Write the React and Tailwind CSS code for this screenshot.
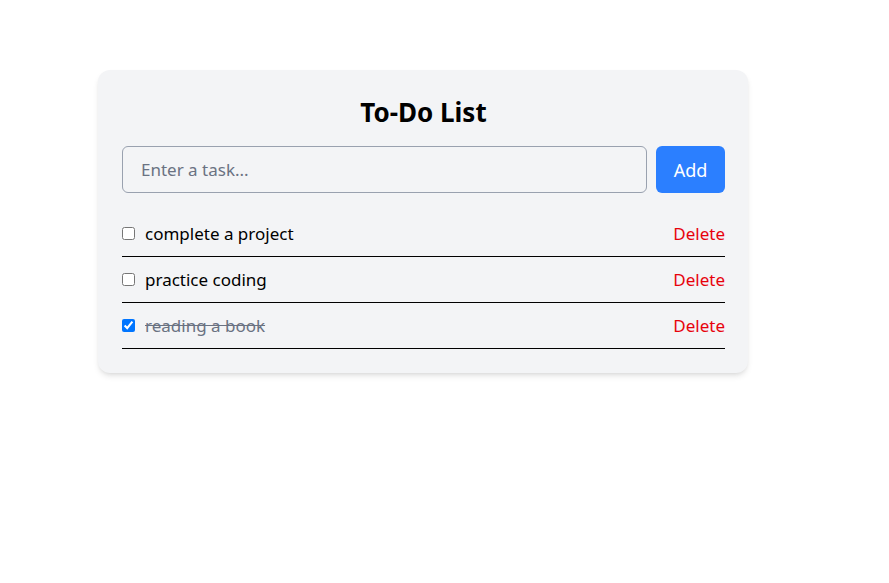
import { useState } from 'react';

const initialTasks = [
  { id: 1, text: 'complete a project', done: false },
  { id: 2, text: 'practice coding', done: false },
  { id: 3, text: 'reading a book', done: true },
];

export default function App() {
  const [tasks, setTasks] = useState(initialTasks);
  const [input, setInput] = useState('');

  const addTask = (e) => {
    e.preventDefault();
    if (!input.trim()) return;
    setTasks([...tasks, { id: Date.now(), text: input.trim(), done: false }]);
    setInput('');
  };

  const toggle = (id) => setTasks(tasks.map(t => (t.id === id ? { ...t, done: !t.done } : t)));
  const remove = (id) => setTasks(tasks.filter(t => t.id !== id));

  return (
    <div className="min-h-screen bg-white pt-[70px] pl-[98px] font-['Noto_Sans',sans-serif]">
      <div className="w-[650px] bg-gray-100 rounded-xl shadow-md pt-6 pb-6 pl-6 pr-[23px]">
        {/* Header */}
        <h1 className="text-[26px] font-bold text-black text-center leading-9 mb-4">To-Do List</h1>

        <form onSubmit={addTask} className="flex gap-[9px] mb-[18px]">
          <input
            value={input}
            onChange={e => setInput(e.target.value)}
            placeholder="Enter a task..."
            className="flex-1 h-[47px] border border-gray-400 rounded-md pl-[18px] text-[17px] text-black placeholder:text-gray-500 bg-transparent outline-none"
          />
          <button type="submit" className="w-[69px] h-[47px] rounded-md bg-blue-500 text-white text-lg">
            Add
          </button>
        </form>

        <ul>
          {tasks.map(task => (
            <li key={task.id} className="flex items-center h-[46px] border-b border-black">
              <input
                type="checkbox"
                checked={task.done}
                onChange={() => toggle(task.id)}
                className="w-[13px] h-[13px] mr-[10px]"
              />
              <span className={`flex-1 text-[17px] ${task.done ? 'line-through text-gray-500' : 'text-black'}`}>
                {task.text}
              </span>
              <button onClick={() => remove(task.id)} className="text-[17px] text-red-600">Delete</button>
            </li>
          ))}
        </ul>
      </div>
    </div>
  );
}
